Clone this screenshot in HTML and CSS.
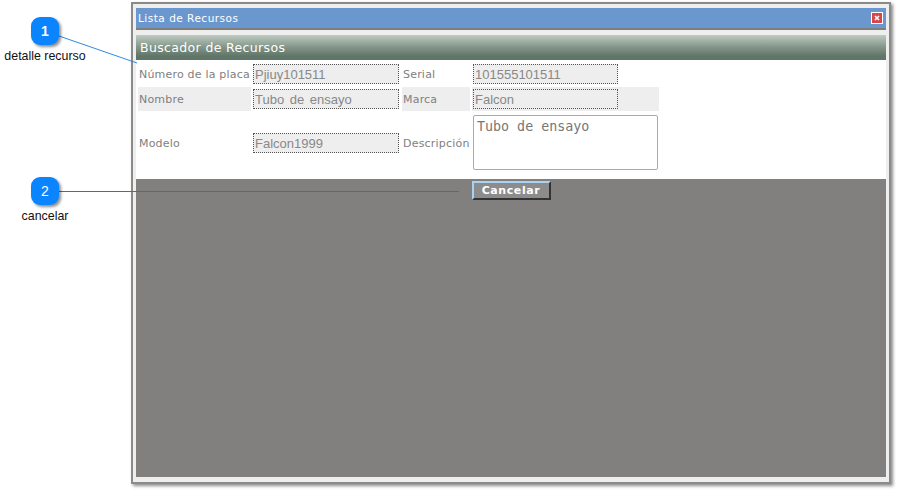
FILE: index.html
```html
<!DOCTYPE html>
<html lang="en">
<head>
  <meta charset="UTF-8" />
  <title>Lista de Recursos</title>
  <link rel="stylesheet" href="styles.css">
</head>
<body>
  <div class="window">
    <div class="title-bar">
      <span>Lista de Recursos</span>
      <span class="close-btn">
        <svg width="10" height="10" viewBox="0 0 10 10"><path d="M3 3l4 4M7 3l-4 4" stroke="#fff" stroke-width="1.6"/></svg>
      </span>
    </div>
    <div class="panel-head">Buscador de Recursos</div>
    <div class="form-grid">
      <div class="label">Número de la placa</div>
      <div class="cell"><div class="field">Pjiuy101511</div></div>
      <div class="label">Serial</div>
      <div class="cell"><div class="field right">101555101511</div></div>

      <div class="label shade">Nombre</div>
      <div class="cell"><div class="field">Tubo de ensayo</div></div>
      <div class="label shade">Marca</div>
      <div class="cell shade"><div class="field right">Falcon</div></div>

      <div class="label tall">Modelo</div>
      <div class="cell"><div class="field">Falcon1999</div></div>
      <div class="label tall">Descripción</div>
      <div class="cell"><div class="text-area">Tubo de ensayo</div></div>
    </div>
    <div class="actions">
      <button class="btn">Cancelar</button>
    </div>
  </div>

  <!-- callouts -->
  <svg class="lines" width="904" height="495">
    <line x1="59" y1="36" x2="137" y2="63" stroke="#2f8ae8" stroke-width="1"/>
    <line x1="59" y1="191.500" x2="459" y2="191.500" stroke="#2a73c8" stroke-width="1"/>
  </svg>
  <div class="callout one">1</div>
  <div class="callout-text text-one">detalle recurso</div>
  <div class="callout two">2</div>
  <div class="callout-text text-two">cancelar</div>
</body>
</html>
```

FILE: styles.css
```css
body {
  margin: 0;
  width: 904px;
  height: 495px;
  overflow: hidden;
  background-color: #fff;
  font-family: "DejaVu Sans", Verdana, sans-serif;
  padding: 2px 0 0 131px;
  box-sizing: border-box;
}

.window {
  box-sizing: border-box;
  width: 760px;
  height: 482px;
  background-color: #eeeeee;
  border: 2px solid #8a8a8a;
  box-shadow: 2px 2px 3px rgba(0, 0, 0, 0.45);
  padding: 4px 3px 5px 3px;
  display: flex;
  flex-direction: column;
}

.title-bar {
  height: 20px;
  flex: none;
  background-color: #6b97cf;
  border-bottom: 2px solid #807e7a;
  color: #fff;
  font-size: 10.5px;
  letter-spacing: 0.5px;
  display: flex;
  align-items: center;
  justify-content: space-between;
  padding: 0 3px 0 2px;
}

.close-btn {
  width: 10px;
  height: 10px;
  background-color: #d8454a;
  border: 1px solid #fff;
  display: block;
}

.close-btn svg {
  display: block;
}

.panel-head {
  flex: none;
  height: 25px;
  margin-top: 5px;
  background: linear-gradient(#bfcbc2, #87998c 45%, #5f7567 85%);
  color: #fff;
  font-size: 12.5px;
  letter-spacing: 0.35px;
  line-height: 25px;
  padding-left: 4px;
}

.form-grid {
  flex: none;
  height: 119px;
  box-sizing: border-box;
  background-color: #fff;
  padding: 2px 0 0 2px;
  display: grid;
  grid-template-columns: 113px 147px 68px 187px;
  grid-template-rows: 24px 24px 61px;
  row-gap: 1px;
  column-gap: 2px;
  font-size: 11px;
  color: #808080;
}

.label {
  display: flex;
  align-items: center;
  padding-left: 1px;
  letter-spacing: 0.2px;
  white-space: nowrap;
}

.label.tall {
  padding-top: 2px;
}

.shade {
  background-color: #eeeeee;
}

.cell {
  display: flex;
  align-items: center;
}

.field {
  box-sizing: border-box;
  width: 146px;
  height: 20px;
  border: 1px dotted #555;
  background-color: #eeeeee;
  color: #888;
  font-family: "Liberation Sans", Arial, sans-serif;
  font-size: 13px;
  word-spacing: 2px;
  line-height: 19px;
  padding-left: 1px;
}

.field.right {
  width: 145px;
  margin-left: 1px;
}

.text-area {
  box-sizing: border-box;
  width: 185px;
  height: 55px;
  margin-left: 1px;
  align-self: flex-start;
  margin-top: 3px;
  border: 1px solid #aaa;
  border-radius: 2px;
  background-color: #fff;
  color: #777;
  font-family: "DejaVu Sans Mono", monospace;
  font-size: 13.33px;
  line-height: 16px;
  padding: 3px 3px;
}

.actions {
  flex: 1;
  background-color: #81807e;
  display: flex;
  justify-content: center;
  align-items: flex-start;
  padding-top: 2px;
}

.btn {
  box-sizing: border-box;
  width: 79px;
  height: 19px;
  padding: 0;
  background-color: #8c8c8c;
  border: 2px solid;
  border-color: #a9d2f2 #333 #333 #a9d2f2;
  color: #fff;
  font-family: "DejaVu Sans", Verdana, sans-serif;
  font-size: 11px;
  font-weight: 700;
  letter-spacing: 0.6px;
}

/* overlay annotations */
.lines {
  position: absolute;
  left: 0;
  top: 0;
}

.callout {
  position: absolute;
  left: 31px;
  width: 28px;
  height: 28px;
  border-radius: 9px;
  background-color: #0a84ff;
  box-shadow: 2px 2px 3px rgba(0, 0, 0, 0.45);
  color: #fff;
  font-family: "Liberation Sans", Arial, sans-serif;
  font-size: 14px;
  line-height: 28px;
  text-align: center;
}

.callout.one { top: 17px; font-weight: 700; }
.callout.two { top: 177px; }

.callout-text {
  position: absolute;
  width: 90px;
  text-align: center;
  font-family: "Liberation Sans", Arial, sans-serif;
  font-size: 12.4px;
  color: #111;
}

.text-one { left: 0; top: 49px; }
.text-two { left: 0; top: 209px; }
```
